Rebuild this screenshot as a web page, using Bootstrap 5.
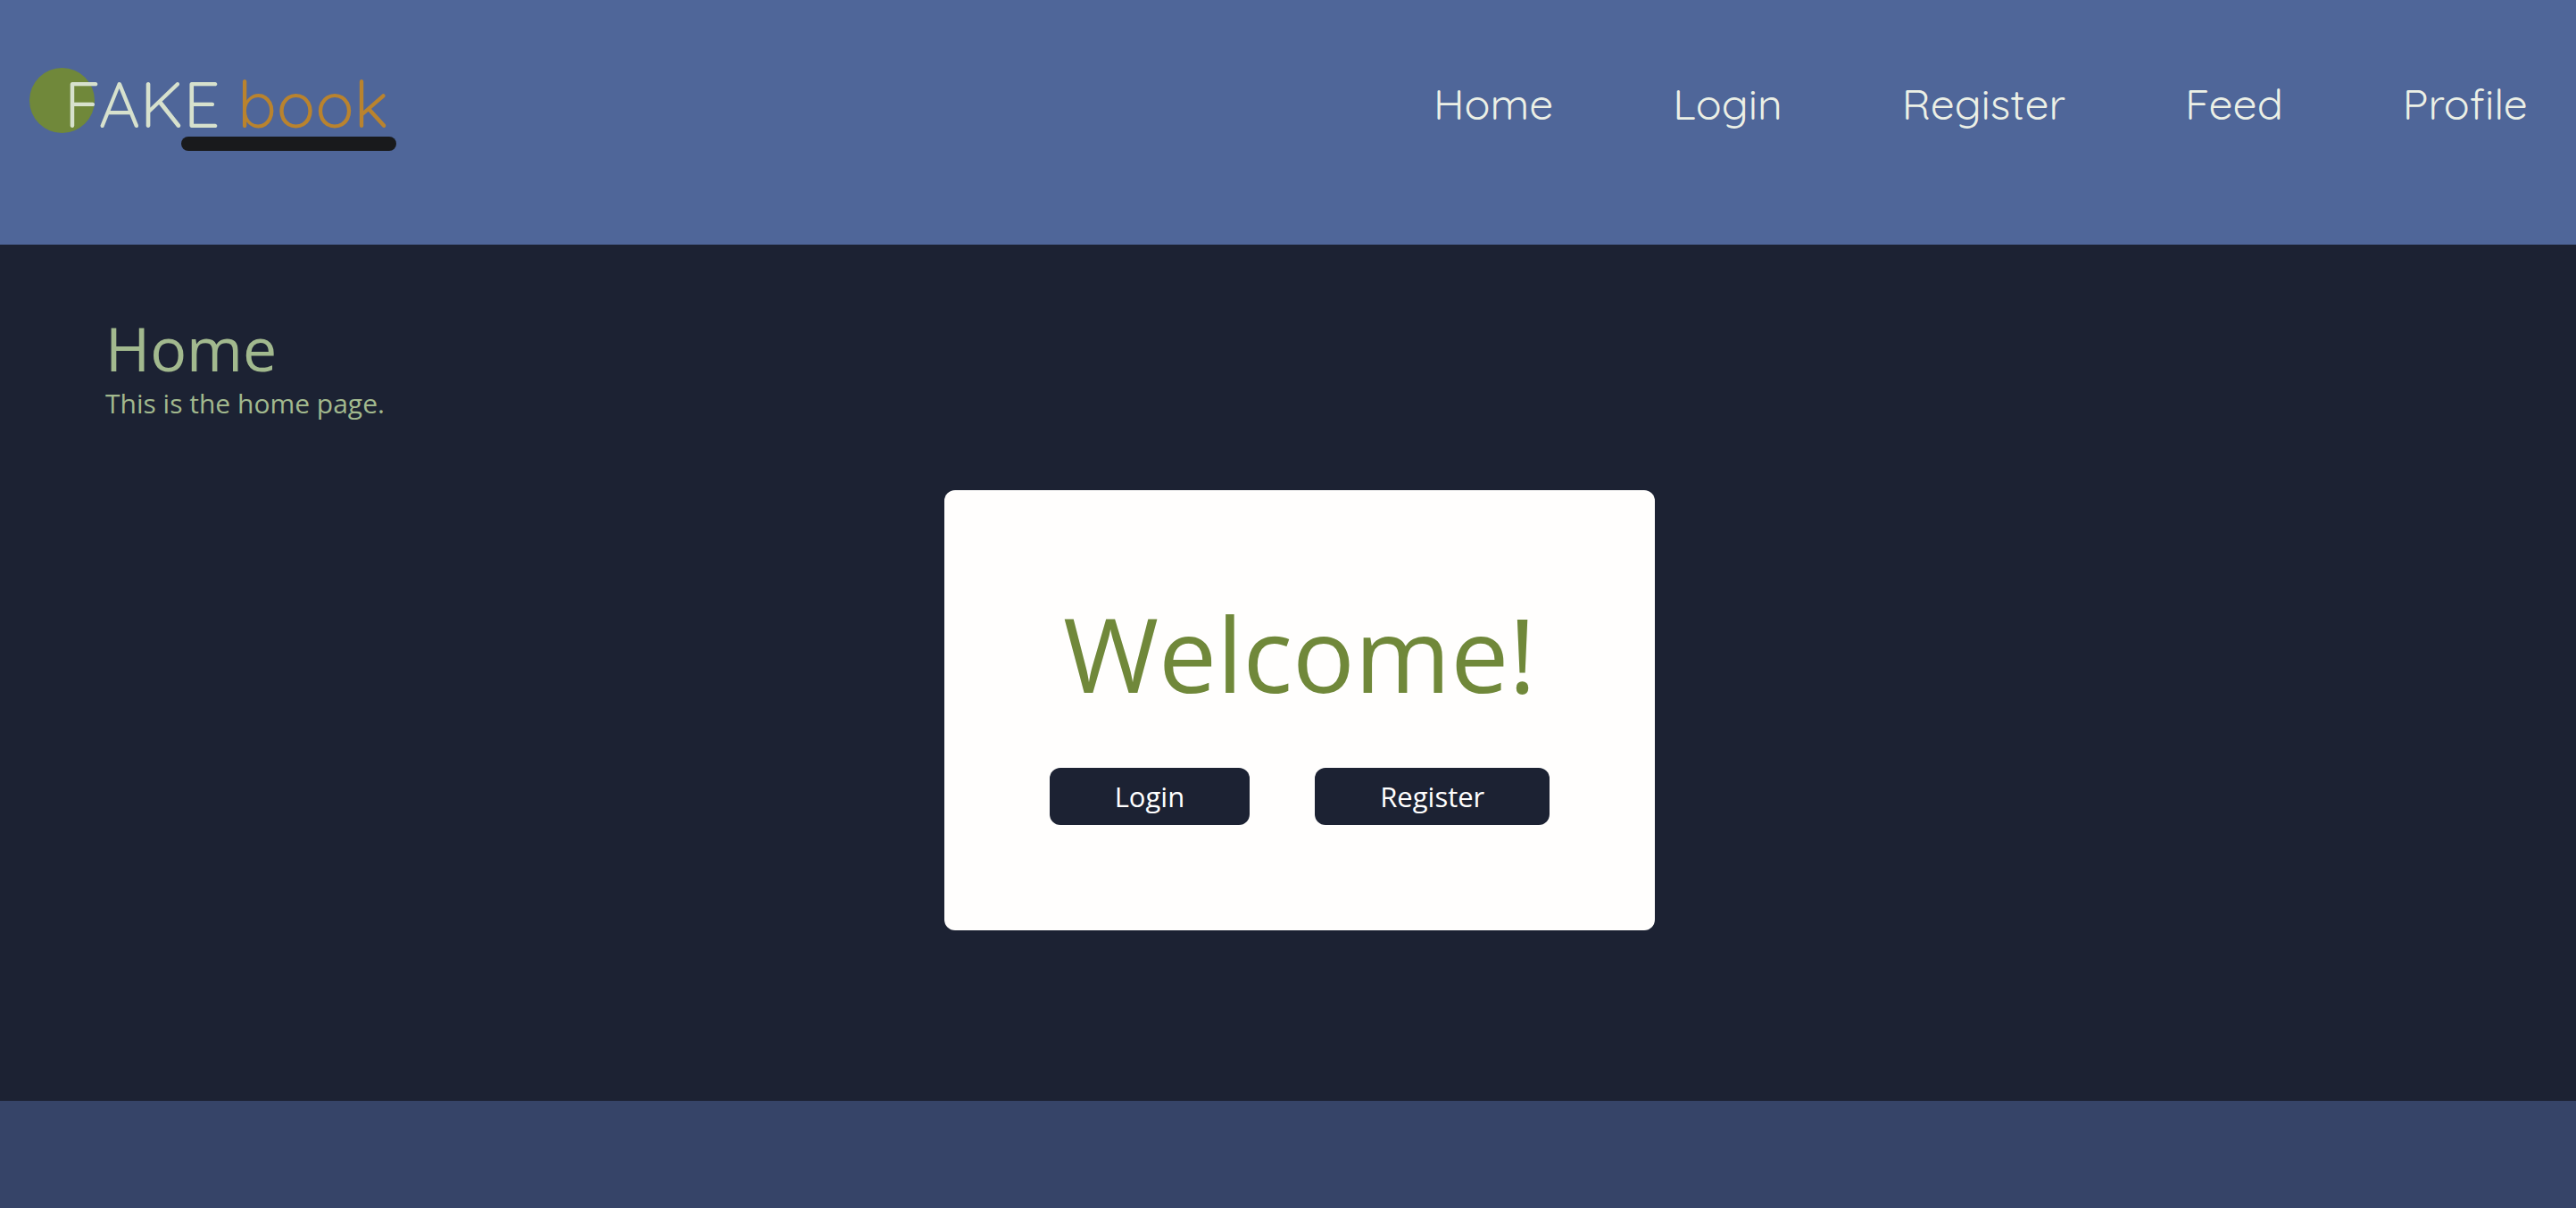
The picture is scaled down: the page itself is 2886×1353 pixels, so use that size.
<!DOCTYPE html>
<html lang="en">
<head>
<meta charset="utf-8">
<meta name="viewport" content="width=device-width, initial-scale=1">
<title>FAKE book</title>
<link href="https://cdn.jsdelivr.net/npm/bootstrap@5.3.0/dist/css/bootstrap.min.css" rel="stylesheet">
<style>
body { font-family: "Segoe UI", "Open Sans", "Noto Sans", sans-serif; font-size: 31px; line-height: 44px; background: #1c2233; color: #a2b98e; }
.site-header { background: #4f6699; min-height: 274px; padding: 72px 54px 72px 33px; font-family: Quicksand, Lato, sans-serif; font-weight: 400; }
.logo { width: 411px; height: 97px; padding: 0 0 0 39px; font-size: 72px; line-height: 88px; color: #d7e1cd; z-index: 0; }
.logo::before { content: ""; position: absolute; left: 0; top: 4px; width: 73px; height: 73px; border-radius: 50%; background: #70883a; z-index: -1; }
.logo::after { content: ""; position: absolute; right: 0; bottom: 0; width: 241px; height: 16px; border-radius: 8px; background: #191a1c; }
.logo:hover { color: #d7e1cd; }
.logo-end { color: #b9832e; }
.site-nav { gap: 134px; }
.site-nav .nav-link { padding: 14px 0; font-size: 48px; line-height: 60px; color: #ecf0e6; }
.site-main { padding: 76px 92px 191px 118px; }
.page-title { font-size: 68px; line-height: 80px; font-weight: 400; margin: 0; }
.page-note { font-size: 30px; margin: 0 0 75px; }
.welcome-box { background: #fffefd; border-radius: 12px; padding: 118px; }
.welcome-title { font-size: 116px; line-height: 128px; font-weight: 400; color: #70883a; margin: 0 0 65px; }
.welcome-actions { gap: 73px; }
.btn-dark-navy { --bs-btn-color: #fff; --bs-btn-bg: #1c2233; --bs-btn-hover-color: #fff; --bs-btn-hover-bg: #364468; --bs-btn-padding-x: 73px; --bs-btn-padding-y: 10px; --bs-btn-border-width: 0; --bs-btn-border-radius: 12px; --bs-btn-font-size: 31px; --bs-btn-line-height: 44px; }
.site-footer { background: #364468; min-height: 120px; }
</style>
</head>
<body class="d-flex flex-column min-vh-100">
<header class="site-header d-flex flex-wrap justify-content-between align-items-start">
  <a class="logo d-block position-relative text-decoration-none text-nowrap" href="#">FAKE <span class="logo-end">book</span></a>
  <nav aria-label="Main">
    <ul class="site-nav nav">
      <li class="nav-item"><a class="nav-link" href="#">Home</a></li>
      <li class="nav-item"><a class="nav-link" href="#">Login</a></li>
      <li class="nav-item"><a class="nav-link" href="#">Register</a></li>
      <li class="nav-item"><a class="nav-link" href="#">Feed</a></li>
      <li class="nav-item"><a class="nav-link" href="#">Profile</a></li>
    </ul>
  </nav>
</header>
<main class="site-main flex-grow-1">
  <h1 class="page-title">Home</h1>
  <p class="page-note">This is the home page.</p>
  <div class="d-flex justify-content-center">
    <section class="welcome-box text-center">
      <h2 class="welcome-title">Welcome!</h2>
      <div class="welcome-actions d-flex justify-content-center">
        <button type="button" class="btn btn-dark-navy">Login</button>
        <button type="button" class="btn btn-dark-navy">Register</button>
      </div>
    </section>
  </div>
</main>
<footer class="site-footer"></footer>
<script src="https://cdn.jsdelivr.net/npm/bootstrap@5.3.0/dist/js/bootstrap.bundle.min.js"></script>
</body>
</html>
